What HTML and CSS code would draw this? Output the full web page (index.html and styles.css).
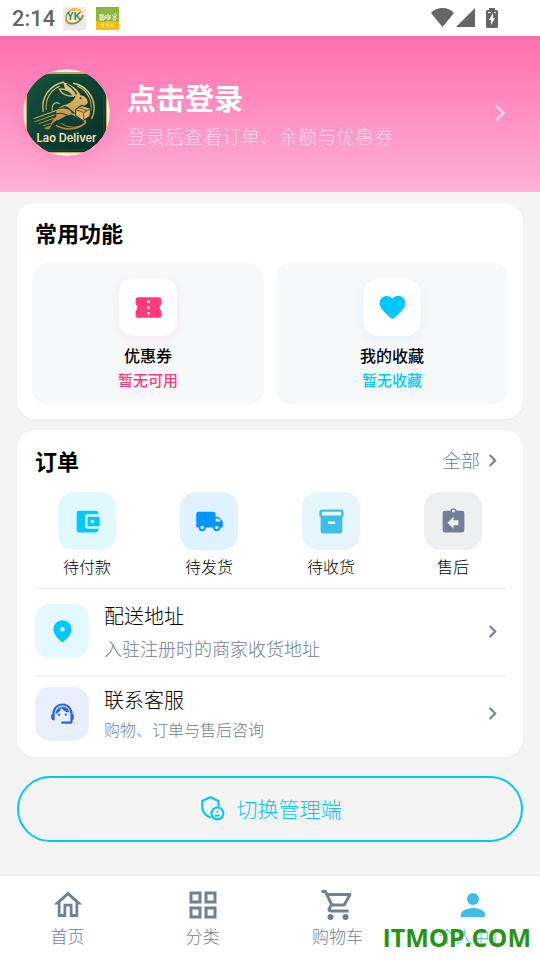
FILE: index.html
```html
<!DOCTYPE html>
<html lang="zh-CN">

<head>
    <meta charset="UTF-8">
    <meta name="viewport" content="width=device-width, initial-scale=1.0">
    <title>个人中心</title>
    <link rel="stylesheet" href="styles.css">
</head>

<body>
<div class="status-bar">
    <span class="time">2:14</span>
    <svg class="app-icon" viewBox="0 0 23 23">
        <rect width="23" height="23" fill="#ececec"/>
        <path d="M4 15C1 8 6 2 13 3" fill="none" stroke="#7cb342" stroke-width="1.5"/>
        <path d="M7 4c4-4 10-2 12 2" fill="none" stroke="#fbc02d" stroke-width="2"/>
        <path d="M3 13c3 6 13 5 17-5" fill="none" stroke="#f4772e" stroke-width="2"/>
        <path d="M7 16c5 2 11-1 13-7" fill="none" stroke="#43a047" stroke-width="1"/>
        <text class="yk" x="11" y="13" text-anchor="middle">YK</text>
    </svg>
    <svg class="app-icon second" viewBox="0 0 23 23">
        <rect width="23" height="23" fill="#8db63c"/>
        <path d="M0 14l6 1 6-1 11 1v8H0z" fill="#fdc009"/>
        <path d="M3 8h5M4 8v5h4V9M6 8v4M10 8v4M12 7v6M14 8v4h-2M16 8l5 4M21 8l-5 4M17 13h3M18 7h2" fill="none" stroke="#fff" stroke-width="1"/>
        <path d="M5 17h3M10 17h2M14 17h1M17 17h1M6 19h2M11 19h2M15 19h3" fill="none" stroke="#fff" stroke-width="1"/>
    </svg>
    <div class="system-icons">
        <svg width="23" height="19" viewBox="0 0 23 19"><path d="M11.500 19L0 5Q4.500 0 11.500 0T23 5z"/></svg>
        <svg width="19" height="19" viewBox="0 0 19 19"><path d="M19 0v19H0z"/></svg>
        <svg class="battery" width="12" height="20" viewBox="0 0 12 20"><path fill-rule="evenodd" d="M3 0h6v2h2l1 1v16l-1 1H1l-1-1V3l1-1h2zM7 5l-4 7h2v5l4-7H7zM2 4v1h3V4zM8 4v1h2V4z"/></svg>
    </div>
</div>

<header>
    <a class="profile" href="#login">
        <svg class="avatar" viewBox="0 0 86 86">
            <defs>
                <clipPath id="round"><circle cx="43" cy="43" r="43"/></clipPath>
                <linearGradient id="green" x1="0" y1="0" x2="1" y2="1">
                    <stop offset="0" stop-color="#15523f"/>
                    <stop offset="1" stop-color="#052e25"/>
                </linearGradient>
                <linearGradient id="gold" x1="0" y1="0" x2="0" y2="1">
                    <stop offset="0" stop-color="#edca7d"/>
                    <stop offset="1" stop-color="#bd842f"/>
                </linearGradient>
            </defs>
            <g clip-path="url(#round)">
                <rect width="86" height="86" fill="#f8eee8"/>
                <rect x="3" y="3" width="80" height="80" rx="5" fill="#cfa35b"/>
                <rect x="4" y="5" width="78" height="77" rx="4" fill="url(#green)"/>
                <rect x="6" y="7" width="74" height="73" rx="3" fill="none" stroke="#1d5240"/>
                <g fill="none" stroke="url(#gold)" stroke-linecap="round">
                    <path d="M20 42A25 25 0 0 1 40 13M50 14a25 25 0 0 1 18 35M62 53a25 25 0 0 1-29 3" stroke-width="1.500"/>
                    <path d="M23 40A22 22 0 0 1 36 17M54 17a22 22 0 0 1 12 28M60 55a23 23 0 0 1-22-1"/>
                    <path d="M11 49l22-8M12 52l20-7M16 54l14-5M20 56l7-2M29 41c-1-6 3-9 7-7"/>
                </g>
                <path d="M52 27C43 25 41 20 40 13c8 2 14 7 17 13 5 1 7 4 7 7-1 3-5 4-9 4l-2 4c4 3 6 5 9 9 2 3-1 4-3 1l-11-6-5 1-7 4c-5 1-7 4-9 8-1 2-5 2-6 0l6-2c2-5 3-7 6-9-2-7 4-11 10-12 3-1 7-3 9-8z" fill="url(#gold)"/>
                <path d="M50 27c-7 0-12-3-14-7 7-1 12 3 14 7" fill="#124a39" stroke="#e2b861" stroke-width="1.500"/>
                <path d="M43 15c5 3 8 6 10 10" fill="none" stroke="#164b36" stroke-width="1.500"/>
                <circle cx="57" cy="29" r="1" fill="#123c2e"/>
                <path d="M35 39c8-2 12 1 16 5M31 45c7-3 12 0 17 3l9 3M40 37c5 1 8 4 9 7" fill="none" stroke="#174b38" stroke-width="1.200"/>
                <path d="M52 40l6-4 9 3-1 8-7 4-7-5z" fill="#dcb66a" stroke="#15422f"/>
                <path d="M52 40l8 3 7-4M60 43v7M55 38l8 3" fill="none" stroke="#855922"/>
                <text class="logo-text" x="43" y="72" text-anchor="middle">Lao Deliver</text>
            </g>
        </svg>
        <span class="profile-text">
            <strong>点击登录</strong>
            <span>登录后查看订单、余额与优惠券</span>
        </span>
        <svg class="chevron large" viewBox="0 0 24 24"><path d="M8.590 16.590L13.170 12 8.590 7.410 10 6l6 6-6 6z"/></svg>
    </a>
</header>

<main>
    <section class="card common">
        <h2>常用功能</h2>
        <div class="features">
            <a class="feature pink" href="#coupons">
                <span class="feature-icon"><svg viewBox="0 0 24 24"><path fill-rule="evenodd" d="M4 4h16a2 2 0 0 1 2 2v3.500a2.900 2.900 0 0 0 0 5V18a2 2 0 0 1-2 2H4a2 2 0 0 1-2-2v-3.500a2.900 2.900 0 0 0 0-5V6a2 2 0 0 1 2-2zm7 2.500v2h2v-2zm0 4.500v2h2v-2zm0 4.500v2h2v-2z"/></svg></span>
                <strong>优惠券</strong>
                <span class="note">暂无可用</span>
            </a>
            <a class="feature cyan" href="#favorites">
                <span class="feature-icon"><svg viewBox="0 0 24 24"><path d="M13.350 20.130c-.76.690-1.930.690-2.690-.010l-.110-.100C5.300 15.270 1.870 12.160 2 8.280c.060-1.700.930-3.330 2.340-4.290 2.640-1.800 5.900-.960 7.660 1.100 1.760-2.060 5.020-2.910 7.660-1.100 1.410.960 2.280 2.590 2.340 4.290.140 3.880-3.300 6.990-8.550 11.760z"/></svg></span>
                <strong>我的收藏</strong>
                <span class="note">暂无收藏</span>
            </a>
        </div>
    </section>

    <section class="card orders">
        <div class="card-head">
            <h2>订单</h2>
            <a class="all" href="#orders">全部 <svg class="chevron" viewBox="0 0 24 24"><path d="M8.590 16.590L13.170 12 8.590 7.410 10 6l6 6-6 6z"/></svg></a>
        </div>
        <nav class="order-types">
            <a href="#unpaid">
                <span class="order-icon wallet"><svg viewBox="0 0 24 24"><path d="M10 16V8c0-1.100.900-2 2-2h9V5a2 2 0 0 0-2-2H5a2 2 0 0 0-2 2v14a2 2 0 0 0 2 2h14a2 2 0 0 0 2-2v-1h-9a2 2 0 0 1-2-2z"/><path fill-rule="evenodd" d="M13 8h9v8h-9a1 1 0 0 1-1-1V9a1 1 0 0 1 1-1zm3 2.500a1.500 1.500 0 1 0 0 3 1.500 1.500 0 0 0 0-3z"/></svg></span>
                待付款
            </a>
            <a href="#unsent">
                <span class="order-icon truck"><svg viewBox="0 0 24 24"><path fill-rule="evenodd" d="M3 4h12a2 2 0 0 1 2 2v2h2.500L23 12v4a1 1 0 0 1-1 1h-1a3 3 0 0 1-6 0H9a3 3 0 0 1-6 0H2a1 1 0 0 1-1-1V6a2 2 0 0 1 2-2zm14 5.500V12h4.500l-2-2.500zM6 15.500a1.500 1.500 0 1 0 0 3 1.500 1.500 0 0 0 0-3zm12 0a1.500 1.500 0 1 0 0 3 1.500 1.500 0 0 0 0-3z"/></svg></span>
                待发货
            </a>
            <a href="#receiving">
                <span class="order-icon box"><svg viewBox="0 0 24 24"><path fill-rule="evenodd" d="M4 2h16a2 2 0 0 1 2 2v3a2 2 0 0 1-1 1.700V20a2 2 0 0 1-2 2H5a2 2 0 0 1-2-2V8.700A2 2 0 0 1 2 7V4a2 2 0 0 1 2-2zm0 2v3h16V4zm5 8v2h6v-2z"/></svg></span>
                待收货
            </a>
            <a href="#after-sale">
                <span class="order-icon returned"><svg viewBox="0 0 24 24"><path fill-rule="evenodd" d="M19 3h-4.200a3 3 0 0 0-5.600 0H5a2 2 0 0 0-2 2v14a2 2 0 0 0 2 2h14a2 2 0 0 0 2-2V5a2 2 0 0 0-2-2zm-7-1a1.300 1.300 0 1 1 0 2.600A1.300 1.300 0 0 1 12 2zm4 13h-4v3l-5-5 5-5v3h4z"/></svg></span>
                售后
            </a>
        </nav>
        <a class="service" href="#address">
            <span class="service-icon pin"><svg viewBox="0 0 24 24"><path fill-rule="evenodd" d="M12 2c-4.200 0-8 3.220-8 8.200 0 3.180 2.450 6.920 7.340 11.220.36.320.97.320 1.330 0C17.550 17.120 20 13.380 20 10.200 20 5.220 16.200 2 12 2zm0 6a2 2 0 1 1 0 4 2 2 0 0 1 0-4z"/></svg></span>
            <span class="service-text"><strong>配送地址</strong><span>入驻注册时的商家收货地址</span></span>
            <svg class="chevron" viewBox="0 0 24 24"><path d="M8.590 16.590L13.170 12 8.590 7.410 10 6l6 6-6 6z"/></svg>
        </a>
        <a class="service contact" href="#contact">
            <span class="service-icon agent"><svg viewBox="0 0 24 24"><path d="M21 12.220C21 6.730 16.740 3 12 3c-4.690 0-9 3.650-9 9.280-.6.340-1 .980-1 1.720v2a2 2 0 0 0 2 2h1v-6.100a7 7 0 0 1 14 0V19h-8v2h8a2 2 0 0 0 2-2v-1.220c.59-.310 1-.920 1-1.640v-2.300c0-.700-.410-1.310-1-1.620z"/><circle cx="9" cy="13" r="1"/><circle cx="15" cy="13" r="1"/><path d="M18 11.030A6.040 6.040 0 0 0 12.050 6c-3.030 0-6.290 2.510-6.030 6.450a8.080 8.080 0 0 0 4.860-5.890c1.310 2.630 4 4.440 7.120 4.470z"/></svg></span>
            <span class="service-text"><strong>联系客服</strong><span>购物、订单与售后咨询</span></span>
            <svg class="chevron" viewBox="0 0 24 24"><path d="M8.590 16.590L13.170 12 8.590 7.410 10 6l6 6-6 6z"/></svg>
        </a>
    </section>

    <button class="switch-btn" type="button">
        <svg viewBox="0 0 24 24" fill="none" stroke="currentColor" stroke-width="2"><path d="M11 21C6.500 19 3 16 3 11V5.500L10.500 2 18 5.500v5"/><circle cx="17" cy="17" r="5.500"/><circle cx="17" cy="15.500" r="1" fill="currentColor" stroke="none"/><path d="M14.800 19h4.400" stroke-width="1.800"/></svg>
        切换管理端
    </button>
</main>

<nav class="tabs">
    <a href="#home">
        <svg viewBox="0 0 24 24"><path fill-rule="evenodd" d="M12 3l9.500 8.600h-2.700V20h-5.600v-7h-2.400v7H5.200v-8.400H2.500zm0 2.700L7 10.200V18h2v-6.800h6V18h2v-7.800z"/></svg>
        首页
    </a>
    <a href="#category">
        <svg viewBox="0 0 24 24"><path fill-rule="evenodd" d="M3 3h8v8H3zm2 2v4h4V5zm8-2h8v8h-8zm2 2v4h4V5zM3 13h8v8H3zm2 2v4h4v-4zm8-2h8v8h-8zm2 2v4h4v-4z"/></svg>
        分类
    </a>
    <a href="#cart">
        <svg viewBox="0 0 24 24"><path d="M15.550 13c.75 0 1.410-.410 1.750-1.030l3.580-6.490A.996.996 0 0 0 20.010 4H5.210l-.940-2H1v2h2l3.600 7.590-1.350 2.440C4.520 15.370 5.480 17 7 17h12v-2H7l1.100-2h7.450zM6.160 6h12.150l-2.760 5H8.530L6.160 6z"/><circle cx="7" cy="20" r="2"/><circle cx="17" cy="20" r="2"/></svg>
        购物车
    </a>
    <a class="active" href="#me" aria-current="page">
        <svg viewBox="0 0 24 24"><circle cx="12" cy="8" r="4"/><path d="M12 14c-2.670 0-8 1.340-8 4v2h16v-2c0-2.660-5.330-4-8-4z"/></svg>
        个人中心
    </a>
    <span class="watermark">ITMOP.COM</span>
</nav>
</body>

</html>
```
FILE: styles.css
```css
* {
    box-sizing: border-box;
}

body {
    display: flex;
    flex-direction: column;
    min-height: 100vh;
    margin: 0;
    background-color: #f4f4f4;
    color: #000;
    font-family: "Noto Sans CJK SC", sans-serif;
    font-weight: 300;
}

a {
    color: inherit;
    text-decoration: none;
}

svg {
    display: block;
    flex: none;
    fill: currentColor;
}

h2 {
    margin: 0;
    font-size: 22px;
    line-height: 28px;
    font-weight: 700;
}

.status-bar {
    display: flex;
    align-items: center;
    height: 36px;
    padding: 0 42px 0 12px;
    background-color: white;
    color: #666;
}

.time {
    margin-right: 8px;
    font-family: Roboto, sans-serif;
    font-size: 22px;
    font-weight: 500;
}

.app-icon {
    width: 23px;
    height: 23px;
}

.app-icon.second {
    margin-left: 10px;
}

.yk {
    fill: #398536;
    font-family: "Liberation Sans", sans-serif;
    font-size: 10px;
    font-weight: bold;
}

.system-icons {
    display: flex;
    gap: 2px;
    margin-left: auto;
}

.battery {
    margin-left: 9px;
}

header {
    padding: 33px 23px 36px 23px;
    background: linear-gradient(#ff70ae, #ffb0d6);
    color: white;
}

.profile {
    display: flex;
    align-items: center;
    gap: 17px;
}

.avatar {
    width: 87px;
    height: 87px;
    border-radius: 50%;
    box-shadow: 0 6px 18px rgba(255, 80, 150, 0.2);
}

.logo-text {
    fill: #f3e8c9;
    font-family: Inter, sans-serif;
    font-size: 11px;
    font-weight: 600;
}

.profile-text {
    flex: 1;
}

.profile-text strong,
.profile-text span {
    display: block;
}

.profile-text strong {
    font-size: 29px;
    line-height: 42px;
    font-weight: 700;
}

.profile-text span {
    padding-top: 4px;
    color: rgba(255, 255, 255, 0.6);
    font-size: 19px;
    line-height: 28px;
}

.chevron {
    width: 25px;
    height: 25px;
    color: #718099;
}

.chevron.large {
    width: 34px;
    height: 34px;
    color: rgba(255, 255, 255, 0.55);
}

main {
    padding: 11px 17px 34px;
}

.card {
    margin-bottom: 11px;
    border-radius: 18px;
    background-color: white;
    box-shadow: 0 1px 3px rgba(0, 0, 0, 0.04);
}

.common {
    padding: 15px;
}

.common h2 {
    padding-left: 3px;
}

.features {
    display: grid;
    grid-template-columns: 1fr 1fr;
    gap: 12px;
    margin-top: 17px;
}

.feature {
    display: flex;
    flex-direction: column;
    align-items: center;
    padding: 15px 0 12px;
    border-radius: 15px;
    background-color: #f7f8fa;
}

.feature strong {
    margin-top: 7px;
    font-size: 16px;
    line-height: 25px;
    font-weight: 500;
}

.feature-icon {
    display: grid;
    place-items: center;
    width: 58px;
    height: 58px;
    border-radius: 16px;
    background-color: white;
}

.feature-icon svg {
    width: 31px;
    height: 31px;
}

.pink .feature-icon {
    color: #ff3b7c;
    box-shadow: 0 4px 12px rgba(255, 59, 124, 0.08);
}

.cyan .feature-icon {
    color: #00c8ff;
    box-shadow: 0 4px 12px rgba(0, 200, 255, 0.08);
}

.note {
    font-size: 15px;
    line-height: 24px;
    font-weight: 500;
}

.pink .note {
    color: #ff3b7c;
}

.cyan .note {
    color: #00c8ff;
}

.orders {
    margin-bottom: 19px;
    padding: 16px 17px 15px 18px;
}

.card-head,
.all {
    display: flex;
    align-items: center;
}

.card-head {
    justify-content: space-between;
}

.all {
    margin-right: 1px;
    color: #718099;
    font-size: 19px;
    line-height: 28px;
}

.order-types {
    display: grid;
    grid-template-columns: repeat(4, 1fr);
    margin: 18px -8px 0 -9px;
    padding-bottom: 10px;
    font-size: 16px;
    line-height: 24px;
}

.order-types a {
    display: flex;
    flex-direction: column;
    align-items: center;
    gap: 4px;
}

.order-icon {
    display: grid;
    place-items: center;
    width: 58px;
    height: 58px;
    border-radius: 16px;
}

.order-icon svg {
    width: 29px;
    height: 29px;
}

.wallet {
    background-color: #e0f9ff;
    color: #00c8ff;
}

.truck {
    background-color: #e0f1ff;
    color: #0095ff;
}

.box {
    background-color: #e7f6fc;
    color: #40bde6;
}

.returned {
    background-color: #eeeff1;
    color: #718099;
}

.service {
    display: flex;
    align-items: center;
    height: 87px;
    padding: 0 1px 2px 0;
    border-top: 1px solid #ececec;
}

.service.contact {
    height: 67px;
    padding-top: 10px;
    border-top: 2px solid #f4f4f4;
}

.service-icon {
    display: grid;
    place-items: center;
    width: 54px;
    height: 54px;
    margin-right: 15px;
    border-radius: 15px;
}

.service-icon svg {
    width: 27px;
    height: 27px;
}

.pin {
    background-color: #e3f9ff;
    color: #00c8ff;
}

.agent {
    background-color: #e9effd;
    color: #2962f3;
}

.service-text {
    flex: 1;
}

.service-text strong,
.service-text span {
    display: block;
}

.service-text strong {
    font-size: 20px;
    line-height: 30px;
    font-weight: 300;
}

.service-text span {
    padding-top: 4px;
    color: #718099;
    font-size: 18px;
    line-height: 26px;
}

.contact .service-text span {
    padding-top: 1px;
    font-size: 16px;
}

.switch-btn {
    display: flex;
    align-items: center;
    justify-content: center;
    gap: 12px;
    width: 100%;
    height: 66px;
    padding: 0 0 2px;
    border: 2px solid #00c8ff;
    border-radius: 33px;
    background-color: transparent;
    color: #00c8ff;
    font: inherit;
    font-size: 21px;
}

.switch-btn svg {
    width: 26px;
    height: 26px;
    fill: none;
}

.tabs {
    position: relative;
    display: grid;
    grid-template-columns: repeat(4, 1fr);
    margin-top: auto;
    padding: 11px 0 12px;
    background-color: white;
    box-shadow: 0 -1px 4px rgba(0, 0, 0, 0.03);
    color: #718099;
    font-size: 17px;
    line-height: 25px;
}

.tabs a {
    display: flex;
    flex-direction: column;
    align-items: center;
}

.tabs svg {
    width: 36px;
    height: 36px;
}

.tabs .active {
    color: #40bde6;
}

.watermark {
    position: absolute;
    right: 9px;
    bottom: 6px;
    color: #279511;
    font-family: "Open Sans", sans-serif;
    font-size: 25px;
    line-height: 34px;
    font-weight: 700;
    pointer-events: none;
}
```
